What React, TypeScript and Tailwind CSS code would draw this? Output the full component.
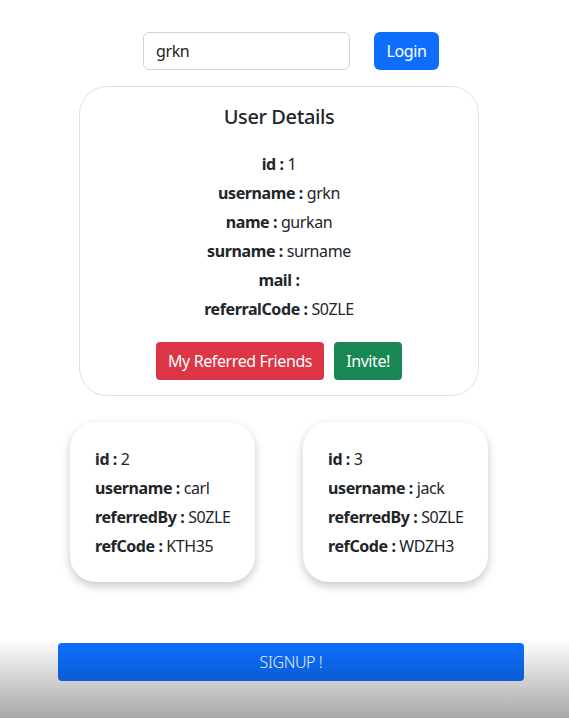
import React from "react";

const font = { fontFamily: '"Segoe UI", "Noto Sans", "Open Sans", sans-serif' };

function Row({ label, value }: { label: string; value: string }) {
  return (
    <div className="h-[29px] leading-[29px]">
      <span className="font-bold">{label} : </span>
      <span>{value}</span>
    </div>
  );
}

function Friend({ id, username, referredBy, refCode }: { id: string; username: string; referredBy: string; refCode: string }) {
  return (
    <div className="w-[185px] h-[160px] rounded-[26px] bg-white shadow-[0_4px_10px_rgba(0,0,0,0.22)] pl-[25px] pt-[23px]">
      <Row label="id" value={id} />
      <Row label="username" value={username} />
      <Row label="referredBy" value={referredBy} />
      <Row label="refCode" value={refCode} />
    </div>
  );
}

export default function App() {
  return (
    <div className="min-h-[718px] bg-white text-[#212529] text-[16px] tracking-[-0.4px]" style={font}>
      <div className="flex gap-6 pl-[143px] pt-8">
        <div className="w-[207px] h-[38px] border border-[#ced4da] rounded-[6px] pl-3 leading-[36px]">grkn</div>
        <button className="w-[65px] h-[38px] rounded-[6px] bg-[#0d6efd] text-white">Login</button>
      </div>
      <div className="ml-[79px] mt-4 w-[400px] h-[310px] border border-[#dee2e6] rounded-[28px] flex flex-col items-center">
        <div className="mt-[16px] text-[20px] font-medium leading-[28px]">User Details</div>
        <div className="mt-[19px] flex flex-col items-center">
          <Row label="id" value="1" />
          <Row label="username" value="grkn" />
          <Row label="name" value="gurkan" />
          <Row label="surname" value="surname" />
          <Row label="mail" value="" />
          <Row label="referralCode" value="S0ZLE" />
        </div>
        <div className="mt-[18px] flex gap-[10px]">
          <button className="h-[38px] px-3 rounded-[4px] bg-[#dc3545] text-white">My Referred Friends</button>
          <button className="h-[38px] px-3 rounded-[4px] bg-[#198754] text-white">Invite!</button>
        </div>
      </div>
      <div className="flex gap-12 ml-[70px] mt-[26px]">
        <Friend id="2" username="carl" referredBy="S0ZLE" refCode="KTH35" />
        <Friend id="3" username="jack" referredBy="S0ZLE" refCode="WDZH3" />
      </div>
      <div className="fixed bottom-0 left-0 right-0 h-[78px] bg-gradient-to-b from-white to-[#a8a8a8] pt-[3px] pl-[58px]">
        <button className="w-[466px] h-[38px] rounded-[4px] bg-gradient-to-b from-[#0d6efd] to-[#0a5dd4] text-[#e4ecfa] font-light">SIGNUP !</button>
      </div>
    </div>
  );
}
